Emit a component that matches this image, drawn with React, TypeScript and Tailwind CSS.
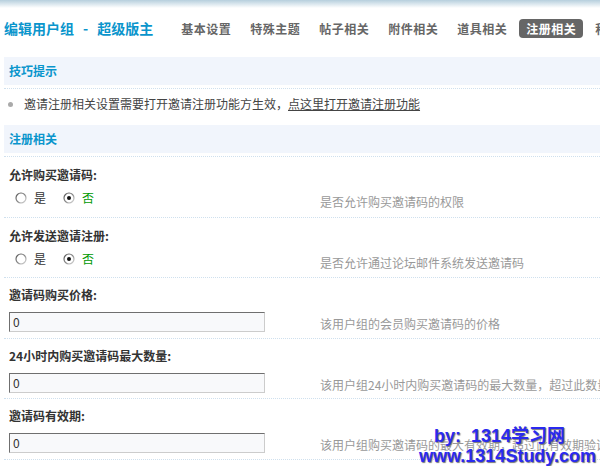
import React from "react";

const FONT = { fontFamily: '"Noto Sans CJK SC", "Liberation Sans", sans-serif' };

function Radio({ checked }: { checked?: boolean }) {
  return (
    <svg width="12" height="12" viewBox="0 0 12 12" className="shrink-0">
      <defs>
        <linearGradient id="rg" x1="0" y1="0" x2="1" y2="1">
          <stop offset="0" stopColor="#555" />
          <stop offset="0.5" stopColor="#888" />
          <stop offset="1" stopColor="#ddd" />
        </linearGradient>
      </defs>
      <circle cx="6" cy="6" r="5" fill="#fff" stroke="url(#rg)" strokeWidth="1.2" />
      {checked && <circle cx="6" cy="6" r="2" fill="#111" />}
    </svg>
  );
}

function SectionHeader({ title }: { title: string }) {
  return (
    <div className="pb-[3px] border-b border-dotted border-[#cfe0ee]">
      <div className="h-[28px] bg-[#f1f5fc] flex items-center pl-[5px] text-[12px] font-bold text-[#0a95cc]">
        {title}
      </div>
    </div>
  );
}

function RadioRow({ label, desc, h }: { label: string; desc: string; h: string }) {
  return (
    <div className={`${h} border-b border-dotted border-[#cfe0ee] pt-[9px]`}>
      <div className="pl-[5px] leading-[18px] text-[12px] font-bold text-[#333]">{label}</div>
      <div className="grid grid-cols-[316px_1fr] items-center h-[26px]">
        <div className="flex items-center pl-[11px] text-[12px] text-[#333]">
          <Radio />
          <span className="ml-[7px]">是</span>
          <span className="ml-[17px]"><Radio checked /></span>
          <span className="ml-[7px] text-[#009900]">否</span>
        </div>
        <div className="text-[12px] text-[#999] mt-[9px] whitespace-nowrap">{desc}</div>
      </div>
    </div>
  );
}

function InputRow({ label, desc, h }: { label: string; desc: string; h: string }) {
  return (
    <div className={`${h} border-b border-dotted border-[#cfe0ee] pt-[8px]`}>
      <div className="pl-[5px] leading-[18px] text-[12px] font-bold text-[#333]">{label}</div>
      <div className="grid grid-cols-[316px_1fr] items-center mt-[7px]">
        <div className="pl-[5px]">
          <div className="w-[256px] h-[20px] bg-[#f8f9fb] border border-t-[#6f6f6f] border-l-[#6f6f6f] border-r-[#cccccc] border-b-[#cccccc] flex items-center pl-[3px] text-[12px] text-[#333]">
            0
          </div>
        </div>
        <div className="text-[12px] text-[#999] mt-[4px] whitespace-nowrap">{desc}</div>
      </div>
    </div>
  );
}

export default function App() {
  return (
    <div className="relative w-[600px] h-[466px] overflow-hidden bg-white" style={FONT}>
      <div className="h-[8px] bg-gradient-to-b from-[#b6cfdd] to-white" />
      <div className="h-[40px] flex items-center pl-[4px] whitespace-nowrap">
        <div className="text-[14px] font-bold text-[#0a95cc] flex items-center">
          编辑用户组<span className="px-[9px]">-</span>超级版主
        </div>
        <div className="flex items-center ml-[21px] gap-[5px] text-[12px] font-bold text-[#666] tracking-[0.5px]">
          {["基本设置", "特殊主题", "帖子相关", "附件相关", "道具相关", "注册相关", "积分相关"].map((t) => (
            <span
              key={t}
              className={
                t === "注册相关"
                  ? "px-[7px] h-[19px] leading-[19px] rounded-[4px] bg-[#666] text-white"
                  : "px-[7px] h-[19px] leading-[19px]"
              }
            >
              {t}
            </span>
          ))}
        </div>
      </div>
      <div className="mt-[9px] ml-[4px]">
        <SectionHeader title="技巧提示" />
        <div className="h-[36px] pt-[6px] flex items-start text-[12px] text-[#444] leading-[18px] whitespace-nowrap">
          <span className="w-[5px] h-[5px] rounded-full bg-[#aaa] ml-[4px] mt-[7px]" />
          <span className="ml-[11px]">邀请注册相关设置需要打开邀请注册功能方生效，</span>
          <span className="underline">点这里打开邀请注册功能</span>
        </div>
        <SectionHeader title="注册相关" />
        <RadioRow h="h-[61px]" label="允许购买邀请码:" desc="是否允许购买邀请码的权限" />
        <RadioRow h="h-[60px]" label="允许发送邀请注册:" desc="是否允许通过论坛邮件系统发送邀请码" />
        <InputRow h="h-[61px]" label="邀请码购买价格:" desc="该用户组的会员购买邀请码的价格" />
        <InputRow
          h="h-[60px]"
          label="24小时内购买邀请码最大数量:"
          desc="该用户组24小时内购买邀请码的最大数量，超过此数量将无法购买"
        />
        <InputRow
          h="h-[61px]"
          label="邀请码有效期:"
          desc="该用户组购买邀请码的最大有效期，超过此有效期验证将失效"
        />
      </div>
      <div
        className="absolute left-[419px] top-[426px] text-[18px] font-bold text-[#2a2af0] leading-[20px] whitespace-nowrap"
        style={{ fontFamily: '"Liberation Sans", "Noto Sans CJK SC", sans-serif', textShadow: "1px 1px 1px #777, 0 0 2px #fff" }}
      >
        <div className="pl-[15px]">by:&nbsp;&nbsp;1314学习网</div>
        <div>www.1314Study.com</div>
      </div>
    </div>
  );
}
